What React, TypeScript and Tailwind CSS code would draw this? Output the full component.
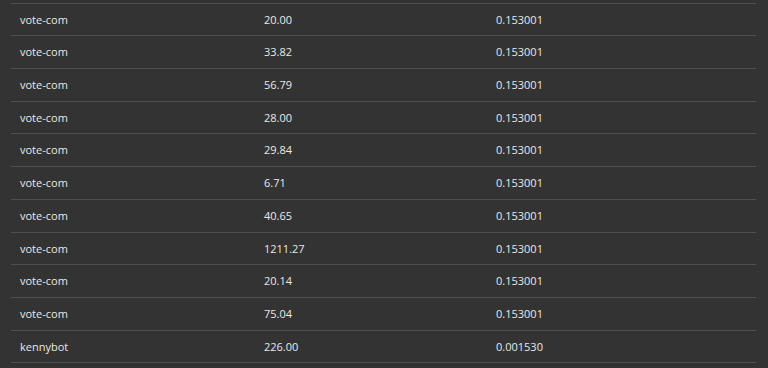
import React from "react";

const rows: [string, string, string][] = [
  ["vote-com", "20.00", "0.153001"],
  ["vote-com", "33.82", "0.153001"],
  ["vote-com", "56.79", "0.153001"],
  ["vote-com", "28.00", "0.153001"],
  ["vote-com", "29.84", "0.153001"],
  ["vote-com", "6.71", "0.153001"],
  ["vote-com", "40.65", "0.153001"],
  ["vote-com", "1211.27", "0.153001"],
  ["vote-com", "20.14", "0.153001"],
  ["vote-com", "75.04", "0.153001"],
  ["kennybot", "226.00", "0.001530"],
];

export default function App() {
  return (
    <div
      className="w-[768px] h-[368px] bg-[#333333] overflow-hidden pt-[2.5px] pl-[11px] pr-[12px]"
      style={{ fontFamily: '"Open Sans", "Noto Sans", sans-serif' }}
    >
      <div className="border-b border-[#4f4f4f]">
        {rows.map((r, i) => (
          <div
            key={i}
            className="flex items-center h-[32.73px] pt-[1px] border-t border-[#4f4f4f] text-[11px] text-[#e8e8e8]"
          >
            <div className="w-[244px] pl-[9px]">{r[0]}</div>
            <div className="w-[232px] pl-[9px]">{r[1]}</div>
            <div className="flex-1 pl-[9px]">{r[2]}</div>
          </div>
        ))}
      </div>
    </div>
  );
}
